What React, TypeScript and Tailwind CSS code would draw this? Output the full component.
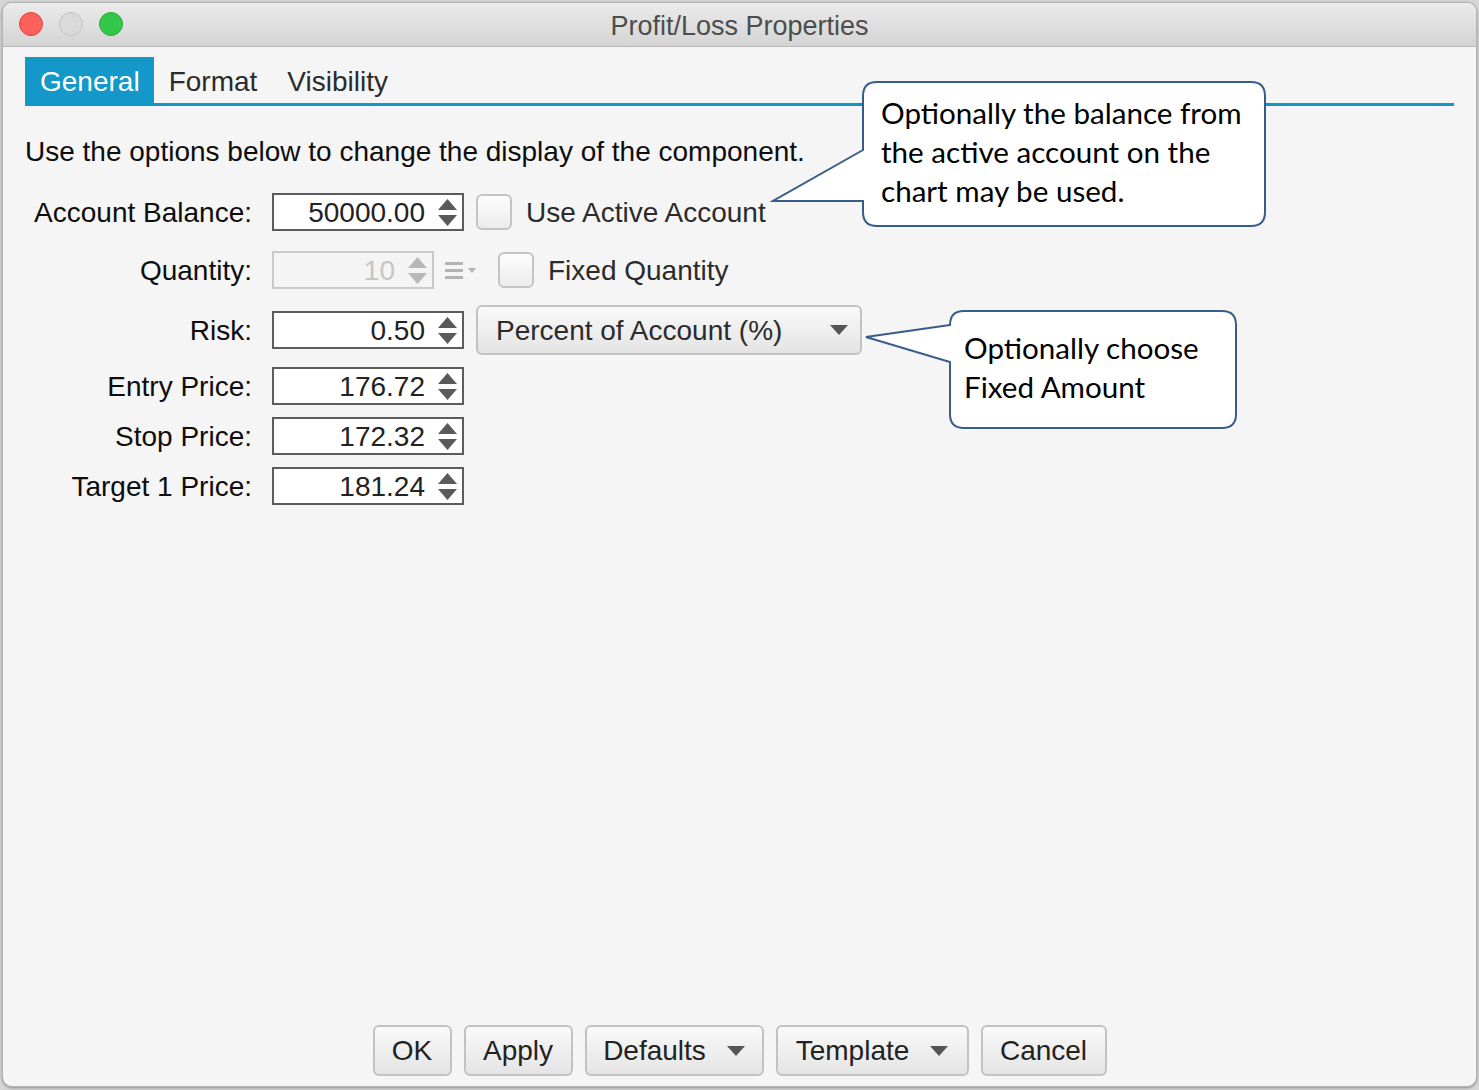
import React from 'react'

const SANS = "font-['Liberation_Sans',Arial,sans-serif]"

function Spinner({ disabled }: { disabled?: boolean }) {
  const fill = disabled ? '#b8b8b8' : '#5a5a5a'
  return (
    <svg width="19" height="27" viewBox="0 0 19 27" className="shrink-0">
      <polygon points="9.5,0 19,11 0,11" fill={fill} />
      <polygon points="0,16 19,16 9.5,27" fill={fill} />
    </svg>
  )
}

function NumberField({ value }: { value: string }) {
  return (
    <div className="w-[192px] h-[38px] border-2 border-[#5c5c5c] bg-white flex items-center justify-end gap-[13px] pr-[5px] text-[28px] leading-none text-[#222]">
      <span className="pt-[1px]">{value}</span>
      <Spinner />
    </div>
  )
}

function Checkbox() {
  return (
    <div className="w-[36px] h-[36px] rounded-[6px] border-2 border-[#c4c4c4] bg-gradient-to-b from-[#fdfdfd] to-[#ececec] shrink-0" />
  )
}

function Caret() {
  return (
    <svg width="18" height="10" viewBox="0 0 18 10" className="shrink-0">
      <polygon points="0,0 18,0 9,10" fill="#555" />
    </svg>
  )
}

function Row({ label, top, children, tall }: { label: string; top: string; children: React.ReactNode; tall?: boolean }) {
  return (
    <div className={`flex items-center ${tall ? 'h-[50px]' : 'h-[38px]'} ${top}`}>
      <div className="w-[227px] pt-[2px] text-right text-[28px] leading-none text-[#0d0d0d]">{label}</div>
      <div className="ml-[20px] flex items-center">{children}</div>
    </div>
  )
}

function DialogButton({ label, width, caret }: { label: string; width: string; caret?: boolean }) {
  return (
    <div
      className={`${width} h-[51px] rounded-[6px] border-2 border-[#c2c2c2] bg-gradient-to-b from-[#fafafa] to-[#e4e4e4] flex items-center justify-center gap-[21px] text-[28px] leading-none text-[#222]`}
    >
      <span className="pt-[1px]">{label}</span>
      {caret && <Caret />}
    </div>
  )
}

export default function App() {
  return (
    <div className={`relative w-[1479px] h-[1090px] bg-[#d6d6d6] pt-[2px] px-[2px] pb-[3px] ${SANS}`}>
      <div className="h-full rounded-[10px] border border-[#b3b3b3] bg-[#f5f5f5] flex flex-col overflow-hidden shadow-[0_1px_3px_rgba(0,0,0,0.35)]">
        {/* title bar */}
        <div className="relative h-[44px] shrink-0 bg-gradient-to-b from-[#ebebeb] to-[#d4d4d4] border-b border-[#b9b9b9] flex items-center justify-center">
          <div className="absolute left-[16px] top-[9px] flex gap-[16px]">
            <div className="w-[24px] h-[24px] rounded-full bg-[#fc605c] border border-[#e0443e]" />
            <div className="w-[24px] h-[24px] rounded-full bg-[#dadada] border border-[#c2c2c2]" />
            <div className="w-[24px] h-[24px] rounded-full bg-[#34c84a] border border-[#2aac35]" />
          </div>
          <span className="pt-[4px] text-[27px] leading-none text-[#4d4d4d]">Profit/Loss Properties</span>
        </div>

        <div className="flex-1 flex flex-col px-[22px]">
          {/* tabs */}
          <div className="mt-[10px] flex items-end border-b-[3px] border-[#1496c7] text-[28px] leading-none">
            <div className="h-[46px] pt-[4px] pl-[15px] pr-[14px] bg-[#1497c9] text-white flex items-center">General</div>
            <div className="h-[46px] pt-[4px] px-[15px] text-[#2b2b2b] flex items-center">Format</div>
            <div className="h-[46px] pt-[4px] px-[15px] text-[#2b2b2b] flex items-center">Visibility</div>
          </div>

          <div className="mt-[28px] h-[34px] pt-[2px] flex items-center text-[28px] leading-none text-[#0d0d0d]">
            Use the options below to change the display of the component.
          </div>

          <div className="flex flex-col">
            <Row label="Account Balance:" top="mt-[25px]">
              <NumberField value="50000.00" />
              <div className="ml-[12px]">
                <Checkbox />
              </div>
              <span className="ml-[14px] pt-[2px] text-[28px] leading-none text-[#2b2b2b]">Use Active Account</span>
            </Row>

            <Row label="Quantity:" top="mt-[20px]">
              <div className="w-[162px] h-[38px] border-2 border-[#cacaca] bg-[#f4f4f4] flex items-center justify-end gap-[13px] pr-[5px] text-[28px] leading-none text-[#c6c6c6]">
                <span className="pt-[1px]">10</span>
                <Spinner disabled />
              </div>
              <svg width="32" height="18" viewBox="0 0 32 18" className="ml-[11px]">
                <rect x="0" y="1" width="18" height="3" fill="#b3b3b3" />
                <rect x="0" y="8" width="18" height="3" fill="#b3b3b3" />
                <rect x="0" y="15" width="18" height="3" fill="#b3b3b3" />
                <polygon points="23,7 31,7 27,12" fill="#b3b3b3" />
              </svg>
              <div className="ml-[21px]">
                <Checkbox />
              </div>
              <span className="ml-[14px] pt-[2px] text-[28px] leading-none text-[#2b2b2b]">Fixed Quantity</span>
            </Row>

            <Row label="Risk:" top="mt-[16px]" tall>
              <NumberField value="0.50" />
              <div className="ml-[12px] w-[386px] h-[50px] rounded-[6px] border-2 border-[#c2c2c2] bg-gradient-to-b from-[#f9f9f9] to-[#e4e4e4] flex items-center justify-between pl-[18px] pr-[12px] text-[28px] leading-none text-[#2b2b2b]">
                <span className="pt-[1px]">Percent of Account (%)</span>
                <Caret />
              </div>
            </Row>

            <Row label="Entry Price:" top="mt-[12px]">
              <NumberField value="176.72" />
            </Row>
            <Row label="Stop Price:" top="mt-[12px]">
              <NumberField value="172.32" />
            </Row>
            <Row label="Target 1 Price:" top="mt-[12px]">
              <NumberField value="181.24" />
            </Row>
          </div>

          <div className="flex-1" />

          {/* dialog buttons */}
          <div className="mb-[10px] flex justify-center gap-[12px]">
            <DialogButton label="OK" width="w-[79px]" />
            <DialogButton label="Apply" width="w-[109px]" />
            <DialogButton label="Defaults" width="w-[179px]" caret />
            <DialogButton label="Template" width="w-[193px]" caret />
            <DialogButton label="Cancel" width="w-[126px]" />
          </div>
        </div>
      </div>

      {/* callout: active account */}
      <div className="absolute left-[770px] top-[80px] w-[500px] h-[150px]">
        <svg width="500" height="150" viewBox="0 0 500 150" className="absolute inset-0">
          <path
            d="M 93 70 L 3 121 L 93 121 L 93 132 Q 93 146 107 146 L 481 146 Q 495 146 495 132 L 495 16 Q 495 2 481 2 L 107 2 Q 93 2 93 16 Z"
            fill="#fff"
            stroke="#385d8a"
            strokeWidth="2"
          />
        </svg>
        <div className="absolute left-[111px] top-[13px] font-['Lato','Noto_Sans',sans-serif] text-[29.6px] leading-[39px] text-black whitespace-nowrap">
          Optionally the balance from
          <br />
          the active account on the
          <br />
          chart may be used.
        </div>
      </div>

      {/* callout: fixed amount */}
      <div className="absolute left-[860px] top-[305px] w-[380px] h-[128px]">
        <svg width="380" height="128" viewBox="0 0 380 128" className="absolute inset-0">
          <path
            d="M 90 20 L 6 32 L 90 57 L 90 109 Q 90 123 104 123 L 362 123 Q 376 123 376 109 L 376 20 Q 376 6 362 6 L 104 6 Q 90 6 90 20 Z"
            fill="#fff"
            stroke="#385d8a"
            strokeWidth="2"
          />
        </svg>
        <div className="absolute left-[104px] top-[23px] font-['Lato','Noto_Sans',sans-serif] text-[29.6px] leading-[39px] text-black whitespace-nowrap">
          Optionally choose
          <br />
          Fixed Amount
        </div>
      </div>
    </div>
  )
}
